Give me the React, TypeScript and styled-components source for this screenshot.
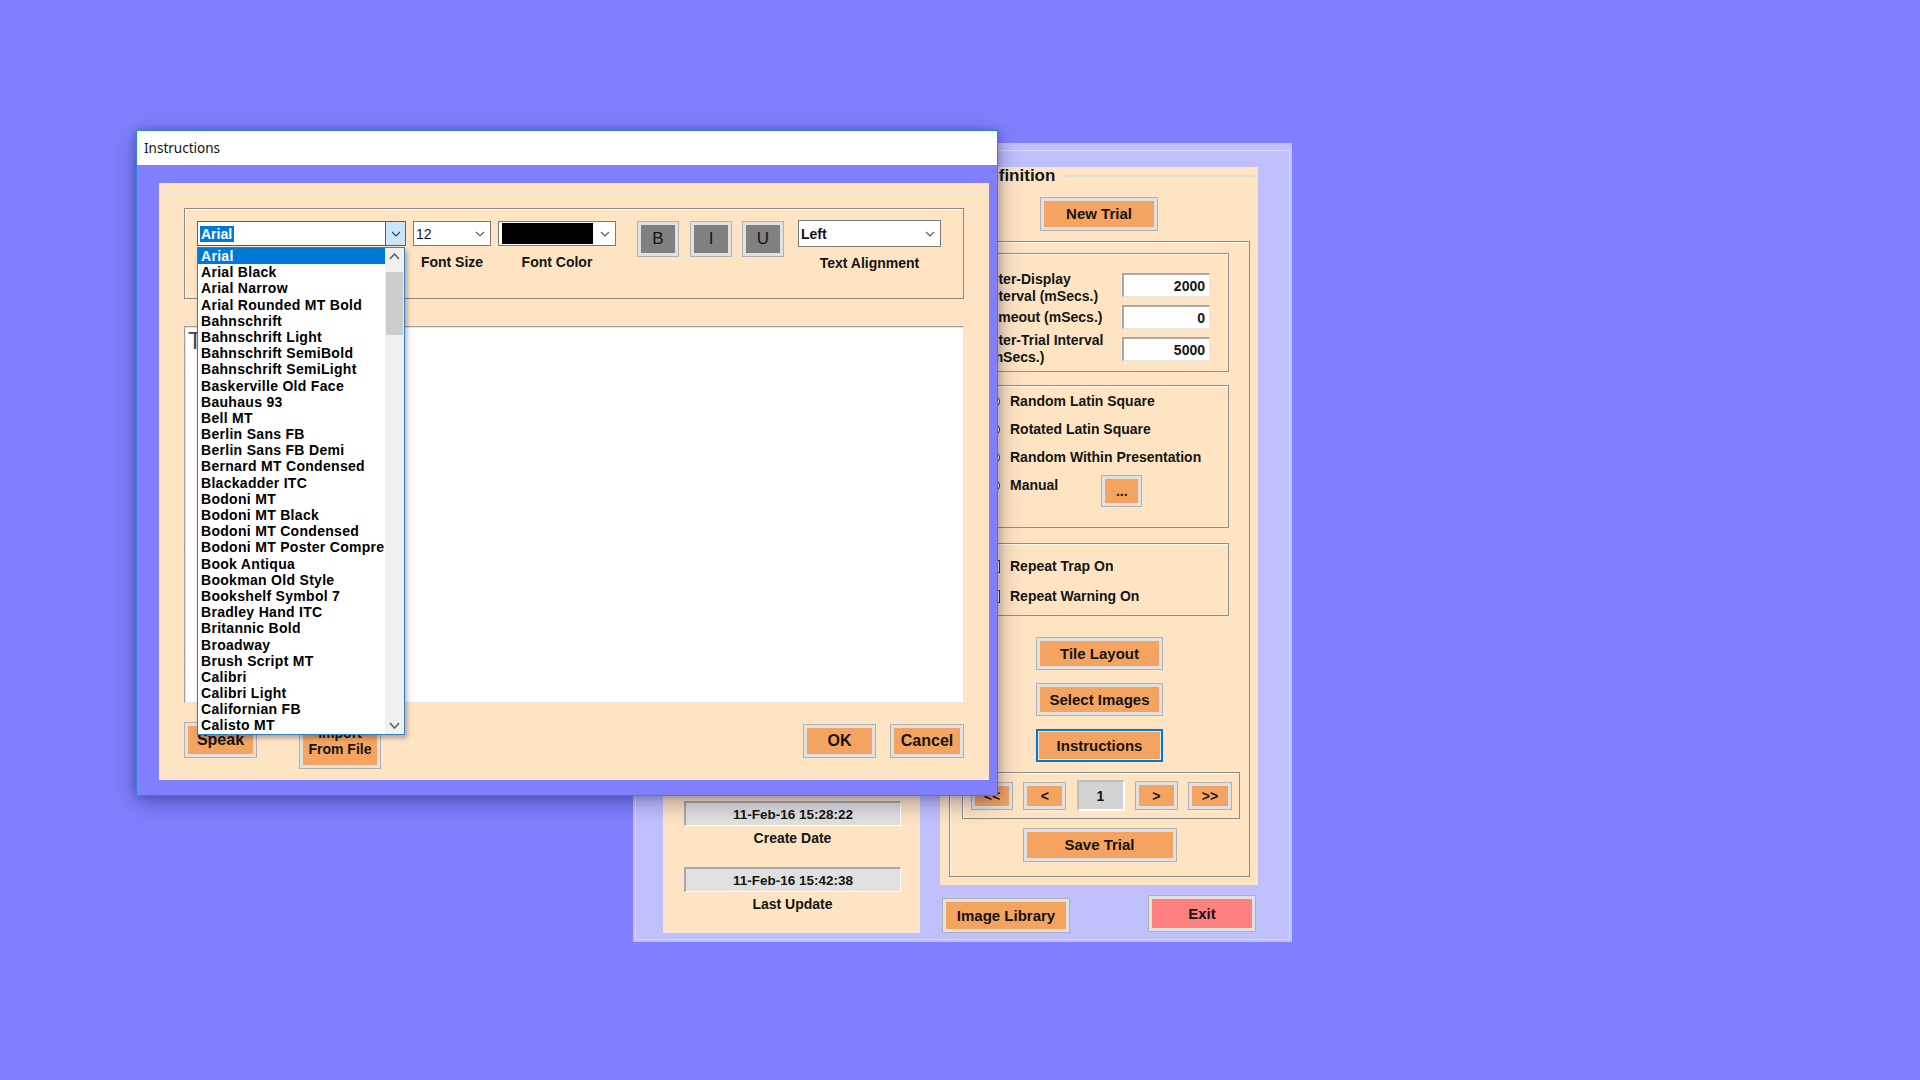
import React from "react";
import styled, { createGlobalStyle, css } from "styled-components";

const GlobalStyle = createGlobalStyle`
  html, body { margin: 0; padding: 0; background: #8080ff; }
  body { font-family: "Liberation Sans", Arial, sans-serif; color: #141414; }
  * { box-sizing: border-box; }
`;

const BEIGE = "#ffe4c4";
const ORANGE = "#f4a460";
const BLUE = "#0078d7";

const Desktop = styled.div`
  position: relative;
  width: 1920px;
  height: 1080px;
  overflow: hidden;
  background: #8080ff;
`;

/* ---------- main (background) window ---------- */

const MainWindow = styled.div`
  position: absolute;
  left: 633px;
  top: 143px;
  width: 659px;
  height: 799px;
  z-index: 1;
  background: #c0c0ff;
  padding: 7px 2px 2px 2px;
  display: flex;
`;

const MainFrame = styled.div`
  flex: 1;
  display: flex;
  gap: 20px;
  border: 1px solid #d9d9ff;
  padding: 16px 31px 6px 27px;
`;

const LeftPanel = styled.div`
  width: 257px;
  background: ${BEIGE};
  border-bottom: 1px solid #f2e6da;
  display: flex;
  flex-direction: column;
  justify-content: flex-end;
  gap: 21px;
  padding: 0 19px 20px 21px;
`;

const DateGroup = styled.div`
  display: flex;
  flex-direction: column;
`;

const DateBox = styled.div`
  height: 25px;
  background: #e0e0e0;
  border-style: solid;
  border-width: 2px 1px 1px 2px;
  border-color: #a8a8a8 #ffffff #ffffff #a8a8a8;
  display: flex;
  align-items: center;
  justify-content: center;
  font-weight: 700;
  font-size: 13.5px;
`;

const Caption = styled.div`
  margin-top: 4px;
  text-align: center;
  font-weight: 700;
  font-size: 14px;
  line-height: 16px;
  white-space: nowrap;
`;

const RightColumn = styled.div`
  width: 318px;
  display: flex;
  flex-direction: column;
`;

const DefinitionPanel = styled.div`
  height: 718px;
  background: ${BEIGE};
  display: flex;
  flex-direction: column;
  align-items: center;
`;

const LegendRow = styled.div`
  align-self: stretch;
  height: 18px;
  display: flex;
  align-items: center;
`;

const LegendText = styled.span`
  margin-left: 37px;
  font-weight: 700;
  font-size: 17px;
  line-height: 18px;
  white-space: nowrap;
`;

const LegendLine = styled.span`
  flex: 1;
  margin-left: 5px;
  height: 2px;
  background: #e4ded8;
`;

const buttonTone = {
  orange: ORANGE,
  pink: "#ff8080",
  gray: "#808080",
};

const WinButton = styled.button<{
  $w: number;
  $h: number;
  $mt?: number;
  $ml?: number;
  $pb?: number;
  $tone?: "orange" | "pink" | "gray";
  $focus?: boolean;
  $size?: number;
  $weight?: number;
}>`
  flex: none;
  width: ${(p) => p.$w}px;
  height: ${(p) => p.$h}px;
  margin-top: ${(p) => p.$mt ?? 0}px;
  margin-left: ${(p) => p.$ml ?? 0}px;
  padding: 0 0 ${(p) => p.$pb ?? 0}px 0;
  background: ${(p) => buttonTone[p.$tone ?? "orange"]};
  border: 1px solid #b0b0b0;
  box-shadow: inset 0 0 0 3px #e1e1e1;
  font-family: "Liberation Sans", Arial, sans-serif;
  font-weight: ${(p) => p.$weight ?? 700};
  font-size: ${(p) => p.$size ?? 15}px;
  line-height: 16px;
  color: #141414;
  display: flex;
  align-items: center;
  justify-content: center;
  text-align: center;
  ${(p) =>
    p.$focus &&
    css`
      border: 2px solid ${BLUE};
      box-shadow: inset 0 0 0 1px #e8e8e8;
    `}
`;

const GroupBox = styled.div`
  align-self: stretch;
  flex: 1;
  margin: 10px 8px 8px 9px;
  border: 1px solid #8c8c8c;
  box-shadow: inset 1px 1px 0 #fff8f0;
  display: flex;
  flex-direction: column;
  align-items: center;
`;

const SubBox = styled.div<{ $mt: number; $h: number }>`
  align-self: stretch;
  margin: ${(p) => p.$mt}px 20px 0 20px;
  height: ${(p) => p.$h}px;
  border: 1px solid #8f8f8f;
  box-shadow: inset 1px 1px 0 #fff8f0;
`;

const ParamGrid = styled(SubBox)`
  display: grid;
  grid-template-columns: 1fr 88px;
  grid-auto-rows: 32px;
  align-items: center;
  padding: 15px 18px 0 15px;
`;

const ParamLabel = styled.div<{ $pt?: number }>`
  padding-top: ${(p) => p.$pt ?? 0}px;
  font-weight: 700;
  font-size: 14px;
  line-height: 17px;
  white-space: nowrap;
`;

const NumberBox = styled.div`
  height: 24px;
  background: #fff;
  border-style: solid;
  border-width: 2px 1px 1px 2px;
  border-color: #a8a8a8 #e8e8e8 #e8e8e8 #a8a8a8;
  display: flex;
  align-items: center;
  justify-content: flex-end;
  padding-right: 4px;
  font-weight: 700;
  font-size: 14px;
`;

const OptionList = styled(SubBox)<{ $pt: number; $gap: number }>`
  display: flex;
  flex-direction: column;
  gap: ${(p) => p.$gap}px;
  padding: ${(p) => p.$pt}px 0 0 16px;
`;

const OptionRow = styled.div`
  display: flex;
  align-items: flex-start;
`;

const Option = styled.div`
  height: 20px;
  display: flex;
  align-items: center;
  gap: 10px;
  font-weight: 700;
  font-size: 14px;
  white-space: nowrap;
`;

const Radio = styled.span`
  width: 13px;
  height: 13px;
  border-radius: 50%;
  border: 1px solid #333;
  background: #fff;
  flex: none;
`;

const Check = styled.span`
  width: 13px;
  height: 13px;
  border: 1px solid #333;
  background: #fff;
  flex: none;
`;

const NavBox = styled.div`
  align-self: stretch;
  margin: 10px 9px 0 12px;
  height: 47px;
  border: 1px solid #8c8c8c;
  box-shadow: inset 1px 1px 0 #fff8f0;
  display: flex;
  align-items: center;
  justify-content: space-between;
  padding: 0 7px 0 8px;
`;

const PageBox = styled.div`
  width: 48px;
  height: 31px;
  background: #d3d3d3;
  border-style: solid;
  border-width: 2px;
  border-color: #bdbdbd #ffffff #ffffff #bdbdbd;
  display: flex;
  align-items: center;
  justify-content: center;
  font-weight: 700;
  font-size: 14px;
`;

const Footer = styled.div`
  display: flex;
  justify-content: space-between;
  align-items: flex-start;
  margin-top: 10px;
  padding: 0 2px;
`;

/* ---------- Instructions dialog ---------- */

const Dialog = styled.section`
  position: absolute;
  left: 136px;
  top: 130px;
  width: 862px;
  height: 666px;
  z-index: 2;
  display: flex;
  flex-direction: column;
  background: #8080ff;
  border: 1px solid #2a86d8;
  box-shadow: 0 6px 22px rgba(0, 0, 50, 0.35), 0 0 8px rgba(0, 0, 50, 0.2);
`;

const TitleBar = styled.header`
  height: 34px;
  flex: none;
  background: #fff;
  display: flex;
  align-items: center;
  padding-left: 7px;
  font-family: "Noto Sans", "Liberation Sans", sans-serif;
  font-size: 13.5px;
  color: #111;
`;

const DialogBody = styled.div`
  flex: 1;
  display: flex;
  padding: 18px 8px 15px 22px;
`;

const ContentPanel = styled.div`
  flex: 1;
  background: ${BEIGE};
  display: flex;
  flex-direction: column;
  padding: 0 25px;
`;

const EtchedRule = styled.div`
  height: 2px;
  margin: 8px -25px 0;
  background: #ece4dc;
`;

const Toolbar = styled.div`
  margin-top: 15px;
  height: 91px;
  border: 1px solid #8a8a8a;
  box-shadow: inset 1px 1px 0 #fff8f0;
  display: flex;
  align-items: flex-start;
  padding: 12px 0 0 12px;
`;

const ComboField = styled.div<{ $w: number; $ml?: number }>`
  position: relative;
  width: ${(p) => p.$w}px;
  margin-left: ${(p) => p.$ml ?? 0}px;
  display: flex;
  flex-direction: column;
  align-items: center;
  flex: none;
`;

const Combo = styled.div<{ $focus?: boolean; $h?: number; $mt?: number }>`
  width: 100%;
  height: ${(p) => p.$h ?? 25}px;
  margin-top: ${(p) => p.$mt ?? 0}px;
  background: #fff;
  border: 1px solid ${(p) => (p.$focus ? BLUE : "#7a7a7a")};
  display: flex;
  align-items: stretch;
`;

const ComboValue = styled.div<{ $bold?: boolean }>`
  flex: 1;
  display: flex;
  align-items: center;
  padding-left: 2px;
  font-size: 14px;
  font-weight: ${(p) => (p.$bold ? 700 : 400)};
  overflow: hidden;
  white-space: nowrap;
`;

const Selected = styled.span`
  background: ${BLUE};
  color: #fff;
  padding: 0 2px 0 1px;
  line-height: 16px;
`;

const Swatch = styled.span`
  width: 91px;
  height: 21px;
  background: #000;
  margin-left: 1px;
`;

const ComboButton = styled.div<{ $focus?: boolean }>`
  width: 20px;
  flex: none;
  display: flex;
  align-items: center;
  justify-content: center;
  background: ${(p) => (p.$focus ? "#cce4f7" : "transparent")};
  border-left: ${(p) => (p.$focus ? `1px solid ${BLUE}` : "none")};
`;

const FieldLabel = styled.div`
  margin-top: 8px;
  font-weight: 700;
  font-size: 14px;
  line-height: 16px;
  white-space: nowrap;
  text-align: center;
`;

const FontList = styled.div`
  position: absolute;
  top: 26px;
  left: 0;
  width: 208px;
  height: 488px;
  z-index: 10;
  background: #fff;
  border: 1px solid #2f7fcc;
  box-shadow: 2px 3px 5px rgba(0, 0, 0, 0.3);
  display: flex;
`;

const FontRows = styled.div`
  flex: 1;
  min-width: 0;
  overflow: hidden;
  display: flex;
  flex-direction: column;
`;

const FontRow = styled.div<{ $selected?: boolean }>`
  height: 16.2px;
  line-height: 16.2px;
  flex: none;
  padding-left: 3px;
  font-weight: 700;
  font-size: 14px;
  letter-spacing: 0.3px;
  white-space: nowrap;
  overflow: hidden;
  color: ${(p) => (p.$selected ? "#fff" : "#000")};
  background: ${(p) => (p.$selected ? BLUE : "transparent")};
`;

const ScrollBar = styled.div`
  width: 19px;
  flex: none;
  background: #f0f0f0;
  display: flex;
  flex-direction: column;
`;

const ScrollArrow = styled.div`
  height: 17px;
  flex: none;
  display: flex;
  align-items: center;
  justify-content: center;
`;

const ScrollThumb = styled.div`
  margin: 7px 1px 0;
  height: 63px;
  background: #cdcdcd;
`;

const ScrollTrack = styled.div`
  flex: 1;
`;

const TextBox = styled.div`
  margin-top: 27px;
  height: 377px;
  background: #fff;
  border-style: solid;
  border-width: 1px;
  border-color: #a0a0a0 #e6e6e6 #e6e6e6 #a0a0a0;
  box-shadow: inset 1px 1px 0 #e3e3e3;
  padding: 1px 3px;
  font-size: 23px;
  line-height: 26px;
  color: #444;
`;

const ButtonRow = styled.div`
  margin-top: 19px;
  display: flex;
  align-items: flex-start;
`;

const Spacer = styled.div`
  flex: 1;
`;

/* ---------- icons ---------- */

const Chevron = ({
  up,
  color = "#5a5a5a",
  w = 10,
  h = 6,
  sw = 1.1,
}: {
  up?: boolean;
  color?: string;
  w?: number;
  h?: number;
  sw?: number;
}) => (
  <svg width={w} height={h} viewBox={`0 0 ${w} ${h}`}>
    <path
      d={up ? `M1 ${h - 1} L${w / 2} 1 L${w - 1} ${h - 1}` : `M1 1 L${w / 2} ${h - 1} L${w - 1} 1`}
      fill="none"
      stroke={color}
      strokeWidth={sw}
    />
  </svg>
);

const fonts = [
  "Arial",
  "Arial Black",
  "Arial Narrow",
  "Arial Rounded MT Bold",
  "Bahnschrift",
  "Bahnschrift Light",
  "Bahnschrift SemiBold",
  "Bahnschrift SemiLight",
  "Baskerville Old Face",
  "Bauhaus 93",
  "Bell MT",
  "Berlin Sans FB",
  "Berlin Sans FB Demi",
  "Bernard MT Condensed",
  "Blackadder ITC",
  "Bodoni MT",
  "Bodoni MT Black",
  "Bodoni MT Condensed",
  "Bodoni MT Poster Compressed",
  "Book Antiqua",
  "Bookman Old Style",
  "Bookshelf Symbol 7",
  "Bradley Hand ITC",
  "Britannic Bold",
  "Broadway",
  "Brush Script MT",
  "Calibri",
  "Calibri Light",
  "Californian FB",
  "Calisto MT",
];

export default function App() {
  return (
    <>
      <GlobalStyle />
      <Desktop>
        <MainWindow>
          <MainFrame>
            <LeftPanel>
              <DateGroup>
                <DateBox>11-Feb-16 15:28:22</DateBox>
                <Caption>Create Date</Caption>
              </DateGroup>
              <DateGroup>
                <DateBox>11-Feb-16 15:42:38</DateBox>
                <Caption>Last Update</Caption>
              </DateGroup>
            </LeftPanel>
            <RightColumn>
              <DefinitionPanel>
                <LegendRow>
                  <LegendText>Definition</LegendText>
                  <LegendLine />
                </LegendRow>
                <WinButton $w={118} $h={34} $mt={12}>
                  New Trial
                </WinButton>
                <GroupBox>
                  <ParamGrid $mt={11} $h={119}>
                    <ParamLabel $pt={6}>
                      Inter-Display
                      <br />
                      Interval (mSecs.)
                    </ParamLabel>
                    <NumberBox>2000</NumberBox>
                    <ParamLabel>Timeout (mSecs.)</ParamLabel>
                    <NumberBox>0</NumberBox>
                    <ParamLabel>
                      Inter-Trial Interval
                      <br />
                      (mSecs.)
                    </ParamLabel>
                    <NumberBox>5000</NumberBox>
                  </ParamGrid>
                  <OptionList $mt={13} $h={143} $pt={5} $gap={8}>
                    <Option>
                      <Radio />
                      Random Latin Square
                    </Option>
                    <Option>
                      <Radio />
                      Rotated Latin Square
                    </Option>
                    <Option>
                      <Radio />
                      Random Within Presentation
                    </Option>
                    <OptionRow>
                      <Option>
                        <Radio />
                        Manual
                      </Option>
                      <WinButton $w={41} $h={32} $ml={43} $size={14}>
                        ...
                      </WinButton>
                    </OptionRow>
                  </OptionList>
                  <OptionList $mt={15} $h={73} $pt={12} $gap={10}>
                    <Option>
                      <Check />
                      Repeat Trap On
                    </Option>
                    <Option>
                      <Check />
                      Repeat Warning On
                    </Option>
                  </OptionList>
                  <WinButton $w={127} $h={33} $mt={21}>
                    Tile Layout
                  </WinButton>
                  <WinButton $w={127} $h={33} $mt={13}>
                    Select Images
                  </WinButton>
                  <WinButton $w={127} $h={33} $mt={13} $focus>
                    Instructions
                  </WinButton>
                  <NavBox>
                    <WinButton $w={42} $h={28} $size={14}>
                      &lt;&lt;
                    </WinButton>
                    <WinButton $w={43} $h={28} $size={14}>
                      &lt;
                    </WinButton>
                    <PageBox>1</PageBox>
                    <WinButton $w={43} $h={29} $size={14}>
                      &gt;
                    </WinButton>
                    <WinButton $w={44} $h={28} $size={14}>
                      &gt;&gt;
                    </WinButton>
                  </NavBox>
                  <WinButton $w={154} $h={34} $mt={9}>
                    Save Trial
                  </WinButton>
                </GroupBox>
              </DefinitionPanel>
              <Footer>
                <WinButton $w={128} $h={35} $mt={3}>
                  Image Library
                </WinButton>
                <WinButton $w={108} $h={37} $tone="pink">
                  Exit
                </WinButton>
              </Footer>
            </RightColumn>
          </MainFrame>
        </MainWindow>

        <Dialog>
          <TitleBar>Instructions</TitleBar>
          <DialogBody>
            <ContentPanel>
              <EtchedRule />
              <Toolbar>
                <ComboField $w={209}>
                  <Combo $focus>
                    <ComboValue $bold>
                      <Selected>Arial</Selected>
                    </ComboValue>
                    <ComboButton $focus>
                      <Chevron color="#404040" />
                    </ComboButton>
                  </Combo>
                  <FieldLabel>Font Name</FieldLabel>
                  <FontList>
                    <FontRows>
                      {fonts.map((f, i) => (
                        <FontRow key={f} $selected={i === 0}>
                          {f}
                        </FontRow>
                      ))}
                    </FontRows>
                    <ScrollBar>
                      <ScrollArrow>
                        <Chevron up color="#606060" w={11} h={7} sw={1.6} />
                      </ScrollArrow>
                      <ScrollThumb />
                      <ScrollTrack />
                      <ScrollArrow>
                        <Chevron color="#606060" w={11} h={7} sw={1.6} />
                      </ScrollArrow>
                    </ScrollBar>
                  </FontList>
                </ComboField>
                <ComboField $w={78} $ml={7}>
                  <Combo>
                    <ComboValue>12</ComboValue>
                    <ComboButton>
                      <Chevron />
                    </ComboButton>
                  </Combo>
                  <FieldLabel>Font Size</FieldLabel>
                </ComboField>
                <ComboField $w={118} $ml={7}>
                  <Combo>
                    <ComboValue>
                      <Swatch />
                    </ComboValue>
                    <ComboButton>
                      <Chevron />
                    </ComboButton>
                  </Combo>
                  <FieldLabel>Font Color</FieldLabel>
                </ComboField>
                <WinButton $w={42} $h={36} $ml={21} $tone="gray" $size={17} $weight={400}>
                  B
                </WinButton>
                <WinButton $w={42} $h={36} $ml={11} $tone="gray" $size={17} $weight={400}>
                  I
                </WinButton>
                <WinButton $w={42} $h={36} $ml={10} $tone="gray" $size={17} $weight={400}>
                  U
                </WinButton>
                <ComboField $w={143} $ml={14}>
                  <Combo $h={27} $mt={-1}>
                    <ComboValue $bold>Left</ComboValue>
                    <ComboButton>
                      <Chevron />
                    </ComboButton>
                  </Combo>
                  <FieldLabel>Text Alignment</FieldLabel>
                </ComboField>
              </Toolbar>
              <TextBox>T</TextBox>
              <ButtonRow>
                <WinButton $w={73} $h={36} $size={16}>
                  Speak
                </WinButton>
                <WinButton $w={82} $h={47} $ml={42} $size={14} $pb={9}>
                  Import
                  <br />
                  From File
                </WinButton>
                <Spacer />
                <WinButton $w={73} $h={34} $mt={2} $size={16}>
                  OK
                </WinButton>
                <WinButton $w={74} $h={34} $mt={2} $ml={14} $size={16}>
                  Cancel
                </WinButton>
              </ButtonRow>
            </ContentPanel>
          </DialogBody>
        </Dialog>
      </Desktop>
    </>
  );
}
